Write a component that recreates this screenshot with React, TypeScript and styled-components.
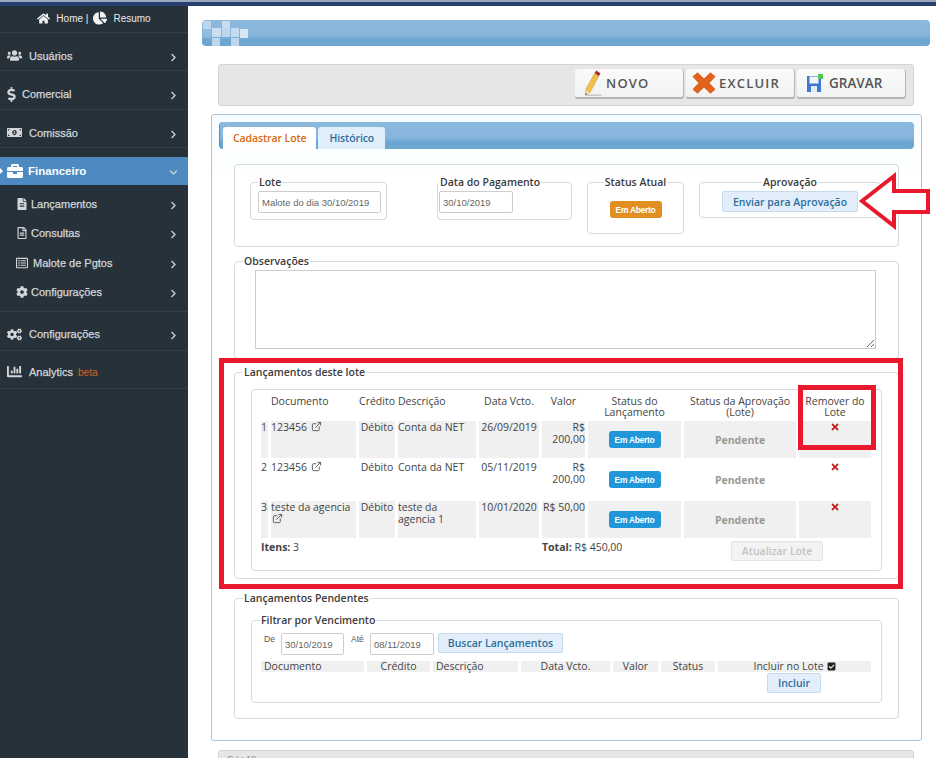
import React from "react";
import styled, { createGlobalStyle } from "styled-components";
import {
  FaBriefcase,
  FaChartBar,
  FaChartPie,
  FaCheckSquare,
  FaChevronDown,
  FaChevronRight,
  FaCog,
  FaCogs,
  FaDollarSign,
  FaFileAlt,
  FaHome,
  FaMoneyBillAlt,
  FaRegFileAlt,
  FaRegListAlt,
  FaTimes,
  FaUsers,
} from "react-icons/fa";
import { FiExternalLink } from "react-icons/fi";

const GlobalStyle = createGlobalStyle`
    html, body {
        margin: 0;
        height: 100%;
        overflow: hidden;
        background: #fff;
    }
`;

const Page = styled.div`
    position: relative;
    width: 936px;
    height: 758px;
    overflow: hidden;
    font-family: "Open Sans", "Liberation Sans", sans-serif;
    font-size: 10.5px;
    color: #444;
    background: #fff;
`;

const TopBar = styled.div`
    height: 6px;
    box-sizing: border-box;
    background: #27406e;
    border-top: 2px solid #9aa8c2;
`;

const Body = styled.div`
    display: flex;
    height: 752px;
`;

/* menu lateral */
const Sidebar = styled.nav`
    width: 188px;
    flex: none;
    background: #27313a;
    color: #c9ced2;
    font-family: "Liberation Sans", sans-serif;
    font-size: 11px;
`;

const HomeRow = styled.div`
    height: 27px;
    display: flex;
    align-items: center;
    justify-content: center;
    gap: 5px;
    padding-bottom: 2px;
    box-sizing: border-box;
    color: #e8eaec;
    font-size: 10px;
    border-bottom: 1px solid #333e47;
    svg {
        color: #f0f2f3;
    }
`;

const HomeIcon = styled.span<{ $size: number }>`
    display: inline-flex;
    font-size: ${(p) => p.$size}px;
    margin-right: 1px;
`;

const MenuItem = styled.div<{ $h: number; $pt: number }>`
    height: ${(p) => p.$h}px;
    display: flex;
    align-items: center;
    padding: ${(p) => p.$pt}px 10px 0 7px;
    box-sizing: border-box;
    border-bottom: 1px solid #333e47;
    color: #d3d7da;
    -webkit-text-stroke: 0.25px #d3d7da;
`;

const ActiveItem = styled.div`
    position: relative;
    height: 28px;
    margin-top: 9px;
    display: flex;
    align-items: center;
    padding: 0 10px 0 7px;
    box-sizing: border-box;
    background: #4d8ac2;
    color: #fff;
    font-size: 11.5px;
    font-weight: 700;
    &::before {
        content: "";
        position: absolute;
        left: 0;
        top: 11px;
        border-left: 3px solid #fff;
        border-top: 3px solid transparent;
        border-bottom: 3px solid transparent;
    }
`;

const SubList = styled.div`
    padding: 4px 0;
    border-bottom: 1px solid #333e47;
`;

const SubItem = styled.div`
    height: 29.5px;
    display: flex;
    align-items: center;
    padding: 0 10px 0 16px;
    box-sizing: border-box;
    color: #d3d7da;
    -webkit-text-stroke: 0.25px #d3d7da;
`;

const MenuIcon = styled.span<{ $w: number; $size?: number; $shift?: number }>`
    display: inline-flex;
    width: ${(p) => p.$w}px;
    margin-left: ${(p) => p.$shift ?? 0}px;
    font-size: ${(p) => p.$size ?? 15}px;
    flex: none;
`;

const MenuLabel = styled.span`
    flex: 1;
`;

const Beta = styled.span`
    margin-left: 5px;
    color: #c4622a;
    font-size: 10px;
    -webkit-text-stroke: 0.1px #c4622a;
`;

const Arrow = styled.span`
    display: inline-flex;
    font-size: 9px;
    margin-top: 3px;
    color: #c9ced2;
`;

/* conteúdo */
const Main = styled.main`
    flex: 1;
    padding-top: 14px;
    min-width: 0;
`;

const HeaderBar = styled.div`
    position: relative;
    height: 26px;
    margin: 0 6px 18px 14px;
    border-radius: 4px;
    background: linear-gradient(#8bb8dd 0%, #88b6dc 58%, #6ca6d1 76%, #6ca6d1 100%);
    display: flex;
    align-items: center;
    overflow: hidden;
`;

const Toolbar = styled.div`
    height: 42px;
    margin: 0 22px 8px 30px;
    box-sizing: border-box;
    background: #e6e6e6;
    border: 1px solid #d4d4d4;
    border-radius: 3px;
    display: flex;
    justify-content: flex-end;
    align-items: flex-start;
    gap: 2px;
    padding: 4px 7px 0 0;
`;

const ToolButton = styled.button<{ $pad: number; $gap: number; $tight?: boolean }>`
    width: 109px;
    height: 30px;
    display: flex;
    align-items: center;
    gap: ${(p) => p.$gap}px;
    padding: 0 0 0 ${(p) => p.$pad}px;
    border: none;
    border-right: 1px solid #b4b4b4;
    border-bottom: 2px solid #b4b4b4;
    border-radius: 3px;
    background: linear-gradient(#fafafa, #f1f2f3);
    color: #555;
    font-family: "Open Sans", "DejaVu Sans", sans-serif;
    font-size: ${(p) => (p.$tight ? "13.5px" : "13px")};
    font-weight: 600;
    letter-spacing: ${(p) => (p.$tight ? "0" : "1.2px")};
`;

const Panel = styled.section`
    margin: 0 14px 9px 23px;
    padding: 7px 7px 21px;
    border: 1px solid #a9c5dc;
    border-radius: 3px;
    background: linear-gradient(#f6fcff, #fff 60px);
`;

const TabBar = styled.div`
    height: 27px;
    box-sizing: border-box;
    margin-bottom: 15px;
    padding: 5px 0 0 3px;
    display: flex;
    gap: 2px;
    align-items: flex-end;
    border-radius: 4px;
    background: linear-gradient(#8bb8dd 0%, #88b6dc 55%, #6ca6d1 75%, #6ca6d1 100%);
    border-left: 1px solid #5c8fb8;
`;

const Tab = styled.div<{ $active?: boolean }>`
    height: 22px;
    box-sizing: border-box;
    padding: 0 ${(p) => (p.$active ? "10px" : "11px")};
    display: flex;
    align-items: center;
    border-radius: 3px 3px 0 0;
    background: ${(p) => (p.$active ? "#fff" : "#dfeffc")};
    color: ${(p) => (p.$active ? "#d9690e" : "#2e6e9e")};
    font-weight: 600;
    font-size: 10.5px;
    letter-spacing: -0.1px;
`;

const Content = styled.div`
    margin: 0 15px;
    display: flex;
    flex-direction: column;
`;

const TopGroup = styled.div`
    height: 83px;
    box-sizing: border-box;
    padding: 10px 0 0 15px;
    border: 1px solid #d6dbdf;
    border-radius: 4px;
    display: flex;
    align-items: flex-start;
    gap: 15px;
`;

const Group = styled.fieldset<{
  $mt?: number;
  $ml?: number;
  $inset?: number;
  $pl?: number;
  $pb?: number;
  $w?: number;
  $h?: number;
}>`
    margin: ${(p) => p.$mt ?? 0}px ${(p) => p.$inset ?? 0}px 0 ${(p) => p.$ml ?? p.$inset ?? 0}px;
    padding: 2px 8px ${(p) => p.$pb ?? 6}px ${(p) => p.$pl ?? 8}px;
    min-width: 0;
    box-sizing: border-box;
    border: 1px solid #d6dbdf;
    border-radius: 4px;
    ${(p) => (p.$w ? `width: ${p.$w}px; flex: none;` : "")}
    ${(p) => (p.$h ? `height: ${p.$h}px;` : "")}
`;

const Legend = styled.legend<{ $center?: boolean }>`
    padding: 0 1px;
    margin: ${(p) => (p.$center ? "0 auto" : "0")};
    font-size: 10.5px;
    line-height: 14px;
    font-weight: 600;
    color: #3c3c3c;
`;

const TextInput = styled.input<{ $w: number }>`
    display: block;
    flex: none;
    width: ${(p) => p.$w}px;
    height: 22px;
    box-sizing: border-box;
    padding: 0 3px;
    border: 1px solid #ccc;
    border-radius: 2px;
    font-family: "Liberation Sans", sans-serif;
    font-size: 9.5px;
    color: #666;
    background: #fff;
`;

const Badge = styled.span<{ $tone: "orange" | "blue" }>`
    display: inline-flex;
    width: 52px;
    height: 17px;
    align-items: center;
    justify-content: center;
    border-radius: 3px;
    background: ${(p) => (p.$tone === "orange" ? "#e28f21" : "#2196d9")};
    color: #fff;
    font-family: "Liberation Sans", sans-serif;
    font-size: 8.5px;
    font-weight: 700;
    letter-spacing: -0.3px;
`;

const Centered = styled.div<{ $pt: number }>`
    display: flex;
    justify-content: center;
    padding-top: ${(p) => p.$pt}px;
`;

const BlueButton = styled.button<{ $w: number; $h?: number; $ml?: number }>`
    display: block;
    flex: none;
    width: ${(p) => p.$w}px;
    height: ${(p) => p.$h ?? 20}px;
    margin-left: ${(p) => p.$ml ?? 0}px;
    padding: 0;
    box-sizing: border-box;
    border: 1px solid #c5dbec;
    border-radius: 2px;
    background: #e2eef9;
    color: #2e6e9e;
    font-family: "Open Sans", sans-serif;
    font-size: 10.5px;
    font-weight: 600;
`;

const Notes = styled.textarea`
    display: block;
    width: 621px;
    height: 79px;
    box-sizing: border-box;
    margin-left: 12px;
    border: 1px solid #ccc;
    background: #fff;
`;

const InnerBox = styled.div`
    height: 182px;
    box-sizing: border-box;
    margin: 8px 8px 0;
    padding: 0 0 0 6px;
    border: 1px solid #d6dbdf;
    border-radius: 4px;
`;

const Lancamentos = styled.table`
    table-layout: fixed;
    width: 616px;
    border-collapse: separate;
    border-spacing: 3px;
    font-size: 10.5px;
    line-height: 12px;
`;

const Th = styled.th<{ $left?: boolean }>`
    height: 25px;
    box-sizing: border-box;
    padding: 3px 0 0;
    font-weight: 400;
    line-height: 11px;
    color: #444;
    vertical-align: top;
    text-align: ${(p) => (p.$left ? "left" : "center")};
`;

const Row = styled.tr<{ $shaded?: boolean }>`
    height: 37px;
    td {
        background: ${(p) => (p.$shaded ? "#f0f0f0" : "transparent")};
    }
`;

const Td = styled.td<{ $align?: string; $middle?: boolean }>`
    padding: 0;
    vertical-align: ${(p) => (p.$middle ? "middle" : "top")};
    text-align: ${(p) => p.$align ?? "left"};
`;

const Pendente = styled.span`
    font-weight: 700;
    color: #999;
`;

const RemoveIcon = styled.span`
    display: inline-flex;
    color: #c8191f;
    font-size: 10px;
    padding-top: 1px;
`;

const LinkIcon = styled(FiExternalLink)`
    font-size: 11px;
    margin-left: 1px;
    vertical-align: -1px;
    color: #555;
`;

const TotalCell = styled.td`
    padding: 0;
    height: 20px;
    vertical-align: top;
`;

const UpdateCell = styled(TotalCell)`
    padding-left: 47px;
`;

const Strong = styled.b`
    font-weight: 700;
`;

const DisabledButton = styled.button`
    width: 92px;
    height: 20px;
    padding: 0;
    border: 1px solid #e4e4e4;
    border-radius: 2px;
    background: #f3f3f3;
    color: #c2c2c2;
    font-family: "Open Sans", sans-serif;
    font-size: 10.5px;
    font-weight: 600;
`;

const FilterRow = styled.div`
    display: flex;
    align-items: flex-start;
    padding: 4px 0 0 4px;
    height: 25px;
`;

const SmallLabel = styled.span<{ $w: number }>`
    flex: none;
    width: ${(p) => p.$w}px;
    padding-top: 1px;
    font-family: "Liberation Sans", sans-serif;
    font-size: 8.5px;
    color: #555;
`;

const FilterInput = styled(TextInput)`
    margin-right: 7px;
`;

const PendTable = styled.table`
    table-layout: fixed;
    width: 616px;
    margin-left: -2px;
    border-collapse: separate;
    border-spacing: 3px;
    line-height: 11px;
    font-size: 10.5px;
`;

const PendTh = styled.th<{ $left?: boolean }>`
    padding: 0 0 0 ${(p) => (p.$left ? "3px" : "0")};
    font-weight: 400;
    background: #f0f0f0;
    color: #444;
    text-align: ${(p) => (p.$left ? "left" : "center")};
    white-space: nowrap;
`;

const CheckIcon = styled(FaCheckSquare)`
    font-size: 9px;
    margin-left: 3px;
    vertical-align: -1px;
    color: #222;
`;

const IncludeRow = styled.div`
    display: flex;
    justify-content: flex-end;
    margin: -2px 52px 0 0;
`;

const Footer = styled.div`
    margin: 0 22px 0 30px;
    height: 30px;
    box-sizing: border-box;
    padding: 3px 8px;
    background: #e6e6e6;
    border: 1px solid #d4d4d4;
    border-radius: 3px;
    font-family: "Liberation Sans", sans-serif;
    font-size: 9px;
    color: #888;
`;

/* anotações vermelhas sobre a imagem */
const RedFrame = styled.div<{ $x: number; $y: number; $w: number; $h: number }>`
    position: absolute;
    left: ${(p) => p.$x}px;
    top: ${(p) => p.$y}px;
    width: ${(p) => p.$w}px;
    height: ${(p) => p.$h}px;
    box-sizing: border-box;
    border: 5px solid #e8192c;
    pointer-events: none;
`;

const RedArrow = styled.svg`
    position: absolute;
    left: 856px;
    top: 170px;
`;

const menu = [
  { label: "Usuários", icon: <FaUsers />, h: 38, w: 22, shift: 0 },
  { label: "Comercial", icon: <FaDollarSign />, h: 39, w: 18, shift: -3 },
  { label: "Comissão", icon: <FaMoneyBillAlt />, h: 38, w: 22, shift: 0 },
];

const sub = [
  { label: "Lançamentos", icon: <FaFileAlt />, w: 15 },
  { label: "Consultas", icon: <FaRegFileAlt />, w: 15 },
  { label: "Malote de Pgtos", icon: <FaRegListAlt />, w: 17 },
  { label: "Configurações", icon: <FaCog />, w: 15 },
];

const rows = [
  { n: 1, doc: "123456", desc: "Conta da NET", venc: "26/09/2019", valor: "R$ 200,00", shaded: true },
  { n: 2, doc: "123456", desc: "Conta da NET", venc: "05/11/2019", valor: "R$ 200,00", shaded: false },
  { n: 3, doc: "teste da agencia", desc: "teste da agencia 1", venc: "10/01/2020", valor: "R$ 50,00", shaded: true },
];

const checkerSquares = [
  [1, 1, 8, 8, 0.6],
  [20, 1, 8, 8, 0.7],
  [1, 9, 8, 9, 0.15],
  [10, 8, 9, 9, 0.75],
  [20, 9, 8, 8, 0.6],
  [29, 8, 8, 9, 0.7],
  [38, 9, 8, 9, 0.9],
  [10, 18, 8, 8, 0.7],
  [29, 18, 8, 8, 0.7],
];

const Checker = () => (
  <svg width="48" height="26" viewBox="0 0 48 26">
    {checkerSquares.map(([x, y, w, h, o]) => (
      <rect key={`${x}-${y}`} x={x} y={y} width={w} height={h} fill="#dfebf6" opacity={o} />
    ))}
  </svg>
);

const Pencil = () => (
  <svg width="20" height="26" viewBox="0 0 24 26" preserveAspectRatio="none">
    <path d="M3 20 L14 3 L19 6 L8 23 L3 24 Z" fill="#f1c04a" stroke="#d49a2a" strokeWidth="0.6" />
    <path d="M14 3 L16 0.5 L21 3.5 L19 6 Z" fill="#a3283a" />
    <path d="M3 20 L8 23 L3 25 Z" fill="#f3dcb0" />
    <path d="M3 23 L3 25 L5 24.4 Z" fill="#222" />
    <path d="M3 25.2 H22" stroke="#999" strokeWidth="0.8" />
  </svg>
);

const BigX = () => (
  <svg width="24" height="24" viewBox="0 0 26 24">
    <path d="M6 1 L13 7.5 L20 1 L25 5 L18.5 12 L25 19 L20 23 L13 16.5 L6 23 L1 19 L7.5 12 L1 5 Z" fill="#e2631d" stroke="#e2631d" strokeWidth="1" strokeLinejoin="round" />
  </svg>
);

const Floppy = () => (
  <svg width="18" height="20" viewBox="0 0 18 20">
    <path d="M1 3 H15 V19 H1 Z" fill="#3f78d0" />
    <rect x="3.5" y="3.5" width="9" height="7" fill="#f2f4f7" />
    <rect x="5" y="13" width="6" height="6" fill="#e6ebf2" />
    <rect x="12" y="1" width="5" height="5" fill="#4fc94f" />
  </svg>
);

export default function App() {
  return (
    <Page>
      <GlobalStyle />
      <TopBar />
      <Body>
        <Sidebar>
          <HomeRow>
            <HomeIcon $size={13}>
              <FaHome />
            </HomeIcon>
            Home |
            <HomeIcon $size={14}>
              <FaChartPie />
            </HomeIcon>
            Resumo
          </HomeRow>
          {menu.map((m) => (
            <MenuItem key={m.label} $h={m.h} $pt={8}>
              <MenuIcon $w={m.w} $shift={m.shift}>
                {m.icon}
              </MenuIcon>
              <MenuLabel>{m.label}</MenuLabel>
              <Arrow>
                <FaChevronRight />
              </Arrow>
            </MenuItem>
          ))}
          <ActiveItem>
            <MenuIcon $w={21} $size={16}>
              <FaBriefcase />
            </MenuIcon>
            <MenuLabel>Financeiro</MenuLabel>
            <Arrow>
              <FaChevronDown />
            </Arrow>
          </ActiveItem>
          <SubList>
            {sub.map((s) => (
              <SubItem key={s.label}>
                <MenuIcon $w={s.w} $size={12}>
                  {s.icon}
                </MenuIcon>
                <MenuLabel>{s.label}</MenuLabel>
                <Arrow>
                  <FaChevronRight />
                </Arrow>
              </SubItem>
            ))}
          </SubList>
          <MenuItem $h={39} $pt={6}>
            <MenuIcon $w={22}>
              <FaCogs />
            </MenuIcon>
            <MenuLabel>Configurações</MenuLabel>
            <Arrow>
              <FaChevronRight />
            </Arrow>
          </MenuItem>
          <MenuItem $h={38} $pt={4}>
            <MenuIcon $w={22}>
              <FaChartBar />
            </MenuIcon>
            <MenuLabel>
              Analytics<Beta>beta</Beta>
            </MenuLabel>
          </MenuItem>
        </Sidebar>
        <Main>
          <HeaderBar>
            <Checker />
          </HeaderBar>
          <Toolbar>
            <ToolButton $pad={8} $gap={3}>
              <Pencil />
              NOVO
            </ToolButton>
            <ToolButton $pad={6} $gap={3}>
              <BigX />
              EXCLUIR
            </ToolButton>
            <ToolButton $pad={9} $gap={5} $tight>
              <Floppy />
              GRAVAR
            </ToolButton>
          </Toolbar>
          <Panel>
            <TabBar>
              <Tab $active>Cadastrar Lote</Tab>
              <Tab>Histórico</Tab>
            </TabBar>
            <Content>
              <TopGroup>
                <Group $w={137} $h={45} $pl={7}>
                  <Legend>Lote</Legend>
                  <TextInput $w={123} defaultValue="Malote do dia 30/10/2019" />
                </Group>
                <Group $w={135} $h={45} $ml={35} $pl={1}>
                  <Legend>Data do Pagamento</Legend>
                  <TextInput $w={74} defaultValue="30/10/2019" />
                </Group>
                <Group $w={97} $h={59}>
                  <Legend $center>Status Atual</Legend>
                  <Centered $pt={10}>
                    <Badge $tone="orange">Em Aberto</Badge>
                  </Centered>
                </Group>
                <Group $w={182} $h={43}>
                  <Legend $center>Aprovação</Legend>
                  <BlueButton $w={136} $h={21} $ml={14}>
                    Enviar para Aprovação
                  </BlueButton>
                </Group>
              </TopGroup>

              <Group $mt={7} $pb={9}>
                <Legend>Observações</Legend>
                <Notes />
              </Group>

              <Group $mt={6} $pb={7}>
                <Legend>Lançamentos deste lote</Legend>
                <InnerBox>
                  <Lancamentos>
                    <colgroup>
                      <col width="7" />
                      <col width="85" />
                      <col width="36" />
                      <col width="78" />
                      <col width="60" />
                      <col width="43" />
                      <col width="93" />
                      <col width="112" />
                      <col width="72" />
                    </colgroup>
                    <thead>
                      <tr>
                        <Th />
                        <Th $left>Documento</Th>
                        <Th>Crédito</Th>
                        <Th $left>Descrição</Th>
                        <Th>Data Vcto.</Th>
                        <Th>Valor</Th>
                        <Th>Status do Lançamento</Th>
                        <Th>Status da Aprovação (Lote)</Th>
                        <Th>Remover do Lote</Th>
                      </tr>
                    </thead>
                    <tbody>
                      {rows.map((r) => (
                        <Row key={r.n} $shaded={r.shaded}>
                          <Td>{r.n}</Td>
                          <Td>
                            {r.doc} <LinkIcon />
                          </Td>
                          <Td $align="center">Débito</Td>
                          <Td>{r.desc}</Td>
                          <Td $align="center">{r.venc}</Td>
                          <Td $align="right">{r.valor}</Td>
                          <Td $align="center" $middle>
                            <Badge $tone="blue">Em Aberto</Badge>
                          </Td>
                          <Td $align="center" $middle>
                            <Pendente>Pendente</Pendente>
                          </Td>
                          <Td $align="center">
                            <RemoveIcon>
                              <FaTimes />
                            </RemoveIcon>
                          </Td>
                        </Row>
                      ))}
                      <tr>
                        <TotalCell colSpan={5}>
                          <Strong>Itens:</Strong> 3
                        </TotalCell>
                        <TotalCell colSpan={2}>
                          <Strong>Total:</Strong> R$ 450,00
                        </TotalCell>
                        <UpdateCell colSpan={2}>
                          <DisabledButton>Atualizar Lote</DisabledButton>
                        </UpdateCell>
                      </tr>
                    </tbody>
                  </Lancamentos>
                </InnerBox>
              </Group>

              <Group $mt={12} $pb={15}>
                <Legend>Lançamentos Pendentes</Legend>
                <Group $mt={6} $pb={9} $inset={8}>
                  <Legend>Filtrar por Vencimento</Legend>
                  <FilterRow>
                    <SmallLabel $w={17}>De</SmallLabel>
                    <FilterInput $w={63} defaultValue="30/10/2019" />
                    <SmallLabel $w={19}>Até</SmallLabel>
                    <TextInput $w={64} defaultValue="08/11/2019" />
                    <BlueButton $w={125} $ml={4}>
                      Buscar Lançamentos
                    </BlueButton>
                  </FilterRow>
                  <PendTable>
                    <colgroup>
                      <col width="103" />
                      <col width="63" />
                      <col width="85" />
                      <col width="89" />
                      <col width="45" />
                      <col width="54" />
                      <col width="153" />
                    </colgroup>
                    <thead>
                      <tr>
                        <PendTh $left>Documento</PendTh>
                        <PendTh>Crédito</PendTh>
                        <PendTh $left>Descrição</PendTh>
                        <PendTh>Data Vcto.</PendTh>
                        <PendTh>Valor</PendTh>
                        <PendTh>Status</PendTh>
                        <PendTh>
                          Incluir no Lote
                          <CheckIcon />
                        </PendTh>
                      </tr>
                    </thead>
                  </PendTable>
                  <IncludeRow>
                    <BlueButton $w={54}>Incluir</BlueButton>
                  </IncludeRow>
                </Group>
              </Group>
            </Content>
          </Panel>
          <Footer>C.I.: 18</Footer>
        </Main>
      </Body>

      <RedFrame $x={219} $y={358} $w={684} $h={231} />
      <RedFrame $x={798} $y={385} $w={78} $h={65} />
      <RedArrow width="76" height="60" viewBox="0 0 76 60">
        <path d="M6 31 L38 6 V21 H72 V42 H38 V56 Z" fill="#fff" stroke="#e8192c" strokeWidth="4" />
      </RedArrow>
    </Page>
  );
}
